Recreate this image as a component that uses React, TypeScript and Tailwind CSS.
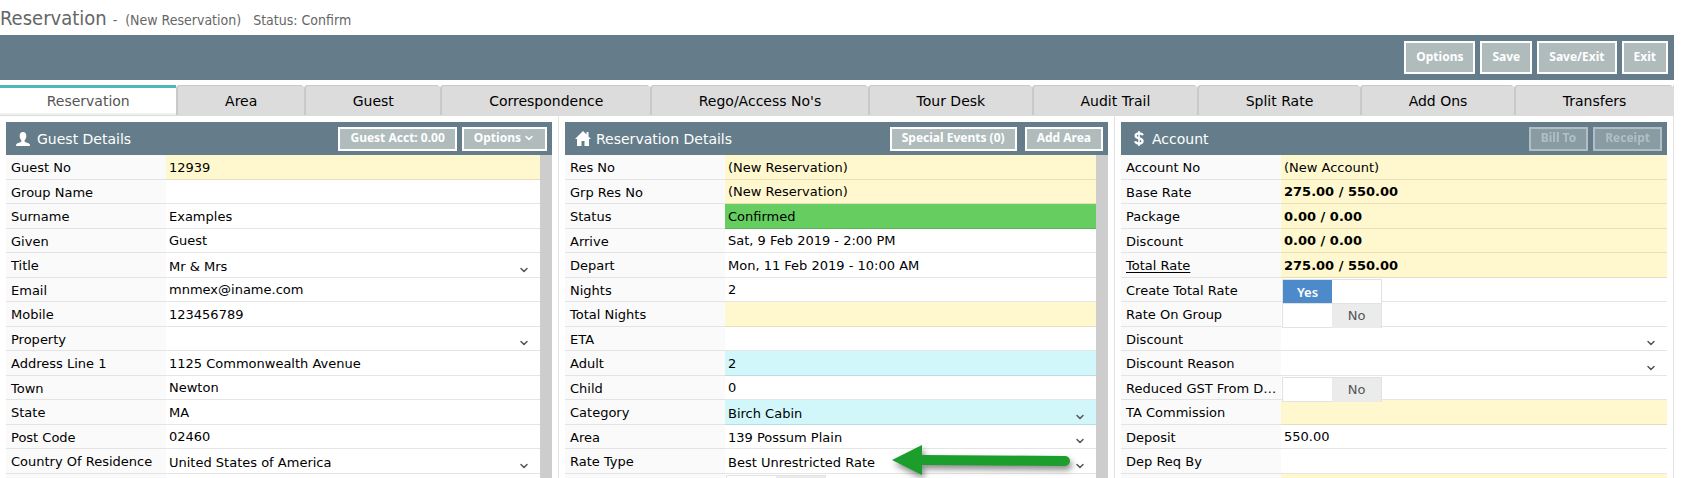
import { useState } from "react"
import type { ReactNode } from "react"
import { ChevronDown } from "lucide-react"

type Tone = "plain" | "locked" | "required" | "confirmed"

type Field = {
  label: string
  value?: string
  kind?: "text" | "select" | "toggle"
  on?: boolean
  tone?: Tone
  bold?: boolean
  link?: boolean
}

const tones: Record<Tone, string> = {
  plain: "bg-white",
  locked: "bg-[#fff8cf]",
  required: "bg-[#d1f7fb]",
  confirmed: "bg-[#66cd61]",
}

const tabs = [
  "Reservation",
  "Area",
  "Guest",
  "Correspondence",
  "Rego/Access No's",
  "Tour Desk",
  "Audit Trail",
  "Split Rate",
  "Add Ons",
  "Transfers",
]

const guestFields: Field[] = [
  { label: "Guest No", value: "12939", tone: "locked" },
  { label: "Group Name" },
  { label: "Surname", value: "Examples" },
  { label: "Given", value: "Guest" },
  { label: "Title", value: "Mr & Mrs", kind: "select" },
  { label: "Email", value: "mnmex@iname.com" },
  { label: "Mobile", value: "123456789" },
  { label: "Property", kind: "select" },
  { label: "Address Line 1", value: "1125 Commonwealth Avenue" },
  { label: "Town", value: "Newton" },
  { label: "State", value: "MA" },
  { label: "Post Code", value: "02460" },
  { label: "Country Of Residence", value: "United States of America", kind: "select" },
  { label: "" },
]

const reservationFields: Field[] = [
  { label: "Res No", value: "(New Reservation)", tone: "locked" },
  { label: "Grp Res No", value: "(New Reservation)", tone: "locked" },
  { label: "Status", value: "Confirmed", tone: "confirmed" },
  { label: "Arrive", value: "Sat, 9 Feb 2019 - 2:00 PM" },
  { label: "Depart", value: "Mon, 11 Feb 2019 - 10:00 AM" },
  { label: "Nights", value: "2" },
  { label: "Total Nights", tone: "locked" },
  { label: "ETA" },
  { label: "Adult", value: "2", tone: "required" },
  { label: "Child", value: "0" },
  { label: "Category", value: "Birch Cabin", kind: "select", tone: "required" },
  { label: "Area", value: "139 Possum Plain", kind: "select" },
  { label: "Rate Type", value: "Best Unrestricted Rate", kind: "select" },
  { label: "", kind: "toggle" },
]

const accountFields: Field[] = [
  { label: "Account No", value: "(New Account)", tone: "locked" },
  { label: "Base Rate", value: "275.00 / 550.00", tone: "locked", bold: true },
  { label: "Package", value: "0.00 / 0.00", tone: "locked", bold: true },
  { label: "Discount", value: "0.00 / 0.00", tone: "locked", bold: true },
  { label: "Total Rate", value: "275.00 / 550.00", tone: "locked", bold: true, link: true },
  { label: "Create Total Rate", kind: "toggle", on: true },
  { label: "Rate On Group", kind: "toggle" },
  { label: "Discount", kind: "select" },
  { label: "Discount Reason", kind: "select" },
  { label: "Reduced GST From Deposit", kind: "toggle" },
  { label: "TA Commission", tone: "locked" },
  { label: "Deposit", value: "550.00" },
  { label: "Dep Req By" },
  { label: "", tone: "locked" },
]

function BarButton({ children, tall, disabled }: { children: ReactNode; tall?: boolean; disabled?: boolean }) {
  return (
    <button
      type="button"
      disabled={disabled}
      className={`flex items-center border-2 border-white bg-[#b0bcbc] px-2.5 pb-0.5 font-['Noto_Sans',sans-serif] text-xs font-bold whitespace-nowrap text-white disabled:opacity-50 ${
        tall ? "h-[33px]" : "h-6"
      }`}
    >
      {children}
    </button>
  )
}

function Toggle({ id, initial }: { id: string; initial?: boolean }) {
  const [on, setOn] = useState(!!initial)

  return (
    <label className="relative z-10 mt-px ml-px grid h-[25px] w-[100px] shrink-0 cursor-pointer grid-cols-2 border border-[#e2e2e2] bg-white text-center leading-6">
      <input id={id} type="checkbox" checked={on} onChange={() => setOn(!on)} className="sr-only" />
      <span className={on ? "bg-[#4d8ac9] font-['Noto_Sans',sans-serif] font-semibold text-white" : ""}>
        {on ? "Yes" : ""}
      </span>
      <span className={on ? "" : "bg-[#ebebeb] text-[#555]"}>{on ? "" : "No"}</span>
    </label>
  )
}

function FieldRow({ field, id }: { field: Field; id: string }) {
  const tone = tones[field.tone ?? "plain"]

  return (
    <div className="flex odd:h-[25px] even:h-6">
      <label
        htmlFor={id}
        className={`w-[160px] shrink-0 truncate border-b border-[#e4e4e4] bg-[#fafafa] pt-px pr-1 pl-[5px] leading-6 ${
          field.link ? "underline underline-offset-2" : ""
        }`}
      >
        {field.label}
      </label>
      <div className={`relative flex min-w-0 flex-1 border-b border-black/10 ${tone}`}>
        {field.kind === "toggle" && <Toggle id={id} initial={field.on} />}
        {field.kind === "select" && (
          <>
            <select id={id} className="w-full appearance-none bg-transparent px-[3px] pt-[3px] outline-none">
              <option>{field.value}</option>
            </select>
            <ChevronDown
              strokeWidth={3}
              className="pointer-events-none absolute right-2.5 bottom-px h-3 w-3 text-[#555]"
            />
          </>
        )}
        {(field.kind ?? "text") === "text" && (
          <input
            id={id}
            type="text"
            defaultValue={field.value}
            readOnly={field.tone === "locked"}
            className={`w-full bg-transparent px-[3px] pt-px outline-none ${field.bold ? "font-bold" : ""}`}
          />
        )}
      </div>
    </div>
  )
}

type PanelProps = {
  name: string
  title: string
  icon: ReactNode
  actions: ReactNode
  fields: Field[]
  scroll?: boolean
  children?: ReactNode
}

function Panel({ name, title, icon, actions, fields, scroll, children }: PanelProps) {
  return (
    <section className="relative min-w-0 border-[#e2e2e2] px-1.5 pt-1.5 not-first:border-l last:border-r">
      <header className="flex h-[33px] items-center bg-[#657d8a] pr-[5px] pl-2.5 text-white">
        <span className="flex w-[21px] shrink-0">{icon}</span>
        <h2 className="flex-1 text-sm whitespace-nowrap">{title}</h2>
        {actions}
      </header>
      <div className="flex">
        <div className="min-w-0 flex-1">
          {fields.map((field, i) => (
            <FieldRow key={i} field={field} id={`${name}-${i}`} />
          ))}
        </div>
        {scroll && <div className="w-3 shrink-0 bg-[#cdcdcd]" />}
      </div>
      {children}
    </section>
  )
}

function UserIcon() {
  return (
    <svg viewBox="0 0 14 14" className="h-3.5 w-3.5" fill="currentColor">
      <path d="M7 0C4.800 0 3.700 1.500 3.700 3.700c0 2 .7 3.600 1.700 4.600v1.200c-.4.700-4 1.500-4.900 2.500-.3.400-.5 1.200-.5 2h14c0-.8-.2-1.600-.5-2-.9-1-4.500-1.800-4.900-2.500V8.300c1-1 1.700-2.600 1.700-4.600C10.300 1.500 9.200 0 7 0z" />
    </svg>
  )
}

function HomeIcon() {
  return (
    <svg viewBox="0 0 16 15" className="h-[15px] w-4" fill="currentColor">
      <path d="M8 0 0 8h2v7h4.500v-5h3v5H14V8h2l-2.500-2.500V1h-2v2.500z" />
    </svg>
  )
}

function DollarIcon() {
  return (
    <svg viewBox="0 0 10 15" className="ml-[3px] h-[15px] w-2.5" fill="none" stroke="currentColor" strokeWidth="2.200">
      <path d="M8.700 4.300C8.300 3 6.900 2.400 5 2.400c-2 0-3.400.9-3.400 2.400 0 3.600 7 1.600 7 5.300 0 1.600-1.500 2.500-3.600 2.500-2.100 0-3.500-.8-3.900-2.300" />
      <path d="M5 0v15" strokeWidth="1.600" />
    </svg>
  )
}

export default function App() {
  const [active, setActive] = useState("Reservation")

  return (
    <div className="h-screen overflow-hidden bg-white pr-2.5 font-['DejaVu_Sans',sans-serif] text-[13px] text-black">
      <div className="flex h-[35px] items-baseline pt-1 font-['DejaVu_Sans_Condensed','DejaVu_Sans',sans-serif] text-sm text-[#666]">
        <h1 className="text-xl">Reservation</h1>
        <span className="ml-1.5">-</span>
        <span className="ml-2">(New Reservation)</span>
        <span className="ml-3">Status: Confirm</span>
      </div>

      <div className="flex h-[45px] items-start justify-end gap-[5px] bg-[#657d8a] px-1.5 pt-1.5">
        <BarButton tall>Options</BarButton>
        <BarButton tall>Save</BarButton>
        <BarButton tall>Save/Exit</BarButton>
        <BarButton tall>Exit</BarButton>
      </div>

      <nav className="mt-[5px] flex border-r border-b border-[#dcdcdc] text-sm">
        {tabs.map((tab) => (
          <button
            key={tab}
            type="button"
            onClick={() => setActive(tab)}
            className={`h-[30px] flex-auto px-4 whitespace-nowrap ${
              active === tab
                ? "border-t-[3px] border-t-[#54b4bc] border-b-2 border-b-[#f0f0f0] bg-white text-[#555]"
                : "rounded-t border-t border-l-2 border-[#c9c9c9] bg-[#dcdcdc]"
            }`}
          >
            {tab}
          </button>
        ))}
      </nav>

      <main className="grid grid-cols-[558fr_556fr_560fr]">
        <Panel
          name="guest"
          title="Guest Details"
          icon={<UserIcon />}
          fields={guestFields}
          scroll
          actions={
            <div className="flex gap-[5px]">
              <BarButton>Guest Acct: 0.00</BarButton>
              <BarButton>
                Options
                <ChevronDown strokeWidth={3} className="ml-0.5 h-3 w-3" />
              </BarButton>
            </div>
          }
        />
        <Panel
          name="reservation"
          title="Reservation Details"
          icon={<HomeIcon />}
          fields={reservationFields}
          scroll
          actions={
            <div className="flex gap-2">
              <BarButton>Special Events (0)</BarButton>
              <BarButton>Add Area</BarButton>
            </div>
          }
        >
          {/* Arrow pointing at the rate type */}
          <svg
            viewBox="0 0 184 40"
            className="pointer-events-none absolute top-[324px] right-10 z-20 h-10 w-[184px] drop-shadow-[2px_4px_3px_rgba(0,0,0,0.45)]"
            fill="#1b9e2b"
          >
            <path d="M2 20 32 5v10l143 1a5 5 0 0 1 0 10l-143-1v10z" />
          </svg>
        </Panel>
        <Panel
          name="account"
          title="Account"
          icon={<DollarIcon />}
          fields={accountFields}
          actions={
            <div className="flex gap-[5px]">
              <BarButton disabled>Bill To</BarButton>
              <BarButton disabled>Receipt</BarButton>
            </div>
          }
        />
      </main>
    </div>
  )
}
